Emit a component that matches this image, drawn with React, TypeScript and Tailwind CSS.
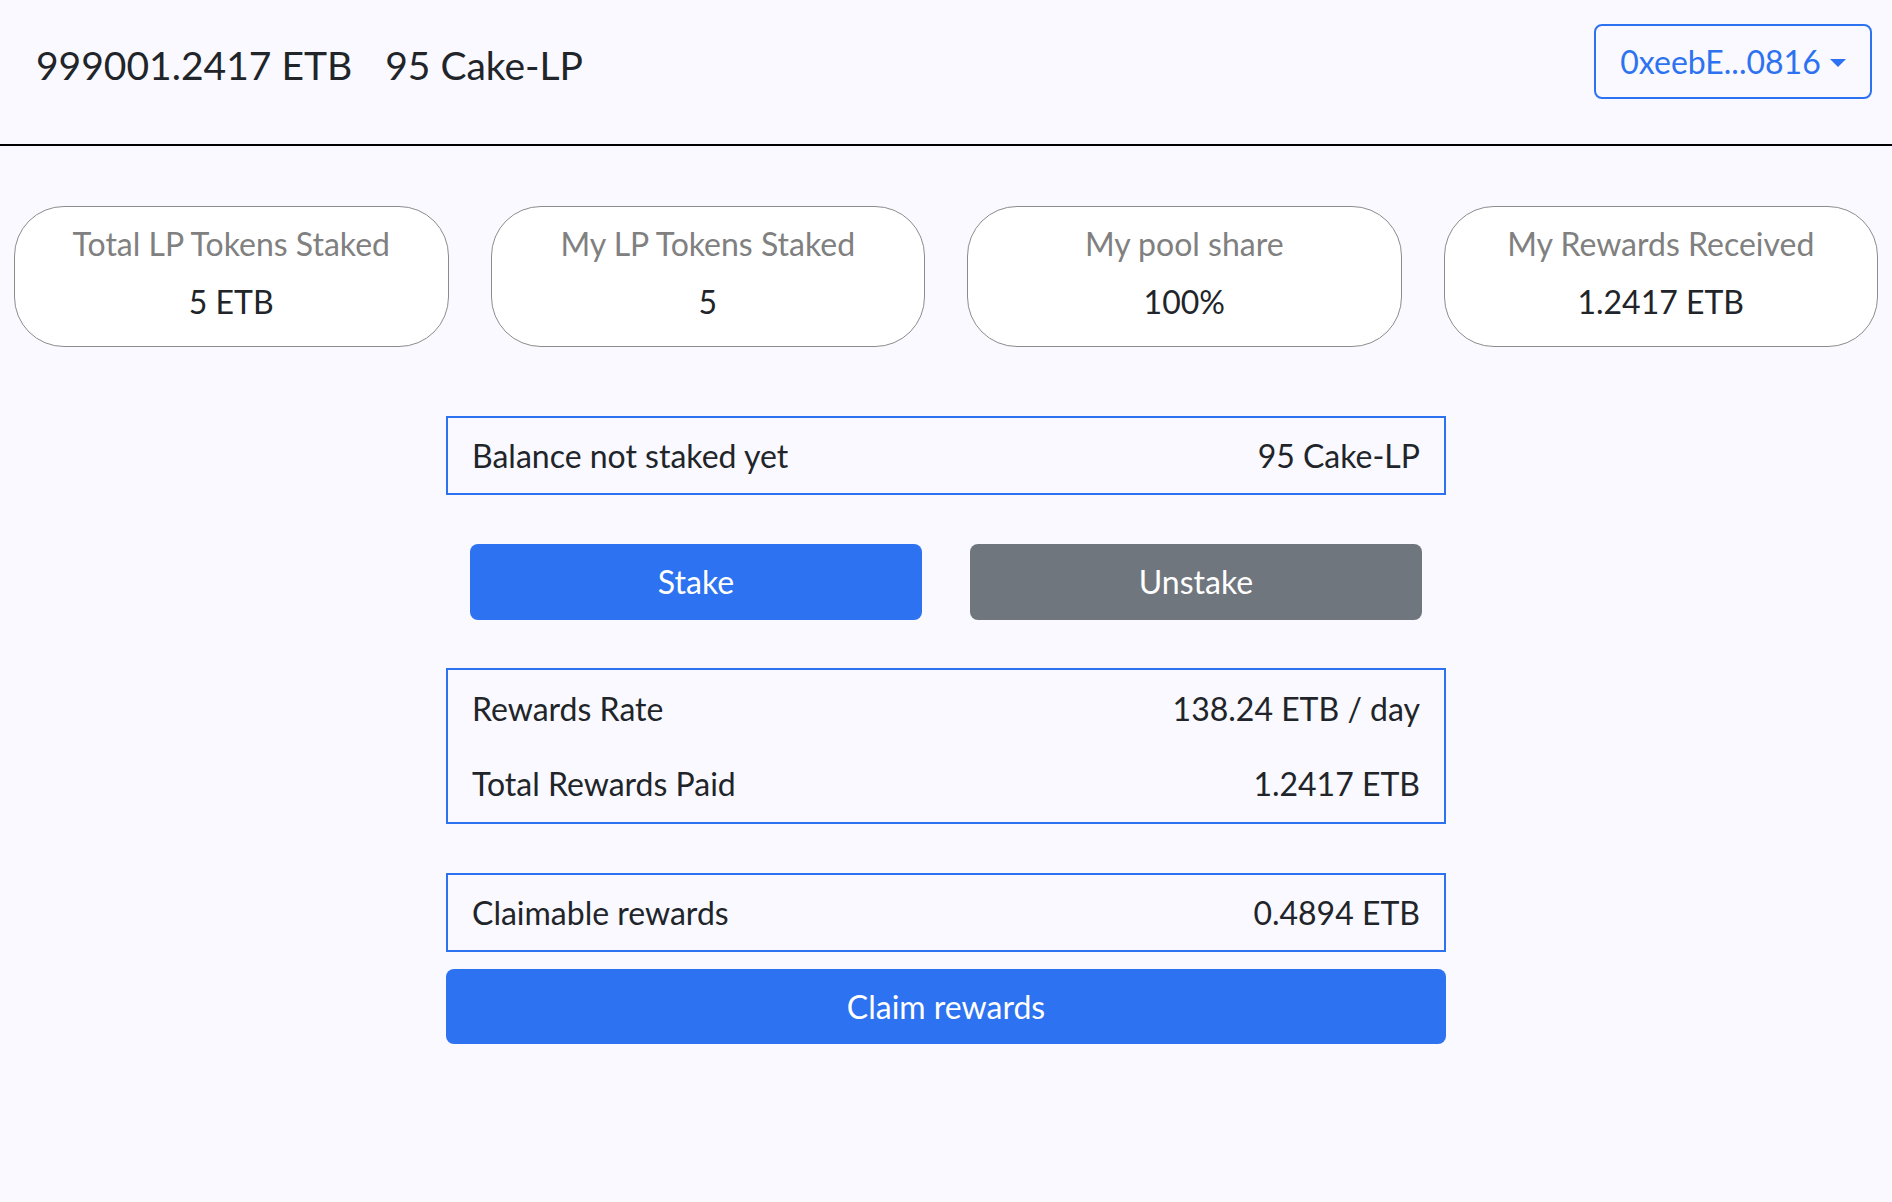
const font = { fontFamily: 'Lato, "Open Sans", sans-serif' }

const stats = [
  { title: 'Total LP Tokens Staked', value: '5 ETB' },
  { title: 'My LP Tokens Staked', value: '5' },
  { title: 'My pool share', value: '100%' },
  { title: 'My Rewards Received', value: '1.2417 ETB' },
]

// One label / value line inside a bordered box
const Row = ({ label, value, height }: { label: string; value: string; height: string }) => (
  <div className={`flex items-center justify-between px-[24px] ${height}`}>
    <span>{label}</span>
    <span>{value}</span>
  </div>
)

export default function App() {
  return (
    <div className="min-h-screen bg-[#f9f9ff] text-[#212529]" style={font}>
      {/* Header */}
      <header className="flex h-[146px] items-start justify-between border-b-2 border-black pr-[20px] pl-[36px]">
        <div className="mt-[41px] flex gap-[33px] text-[39px] leading-[48px]">
          <span>999001.2417 ETB</span>
          <span>95 Cake-LP</span>
        </div>
        <button className="mt-[24px] flex h-[75px] w-[278px] items-center justify-center rounded-[8px] border-2 border-[#2d72f0] text-[32px] text-[#2d72f0]">
          <span>0xeebE...0816</span>
          <span className="ml-[9px] mt-[2px] h-0 w-0 border-x-[8px] border-t-[8px] border-x-transparent border-t-[#2d72f0]" />
        </button>
      </header>

      {/* Stats cards */}
      <div className="mt-[60px] grid grid-cols-4 gap-[42px] px-[14px]">
        {stats.map((s) => (
          <div
            key={s.title}
            className="flex h-[141px] flex-col items-center rounded-[50px] border-[1.5px] border-[#8c8c8c] bg-white pt-[19px] text-[32px] leading-[36px]"
          >
            <span className="text-[#808080]">{s.title}</span>
            <span className="mt-[22px]">{s.value}</span>
          </div>
        ))}
      </div>

      {/* Staking panel */}
      <div className="mx-auto mt-[69px] flex w-[1000px] flex-col text-[32px]">
        <div className="border-2 border-[#2d72f0]">
          <Row label="Balance not staked yet" value="95 Cake-LP" height="h-[75px]" />
        </div>

        <div className="mt-[49px] grid grid-cols-2 gap-[48px] px-[24px]">
          <button className="h-[76px] rounded-[8px] bg-[#2d72f0] text-white">Stake</button>
          <button className="h-[76px] rounded-[8px] bg-[#6f767e] text-white">Unstake</button>
        </div>

        <div className="mt-[48px] border-2 border-[#2d72f0] py-[1px]">
          <Row label="Rewards Rate" value="138.24 ETB / day" height="h-[75px]" />
          <Row label="Total Rewards Paid" value="1.2417 ETB" height="h-[75px]" />
        </div>

        <div className="mt-[49px] border-2 border-[#2d72f0]">
          <Row label="Claimable rewards" value="0.4894 ETB" height="h-[75px]" />
        </div>

        <button className="mt-[17px] h-[75px] rounded-[8px] bg-[#2d72f0] text-white">Claim rewards</button>
      </div>
    </div>
  )
}
